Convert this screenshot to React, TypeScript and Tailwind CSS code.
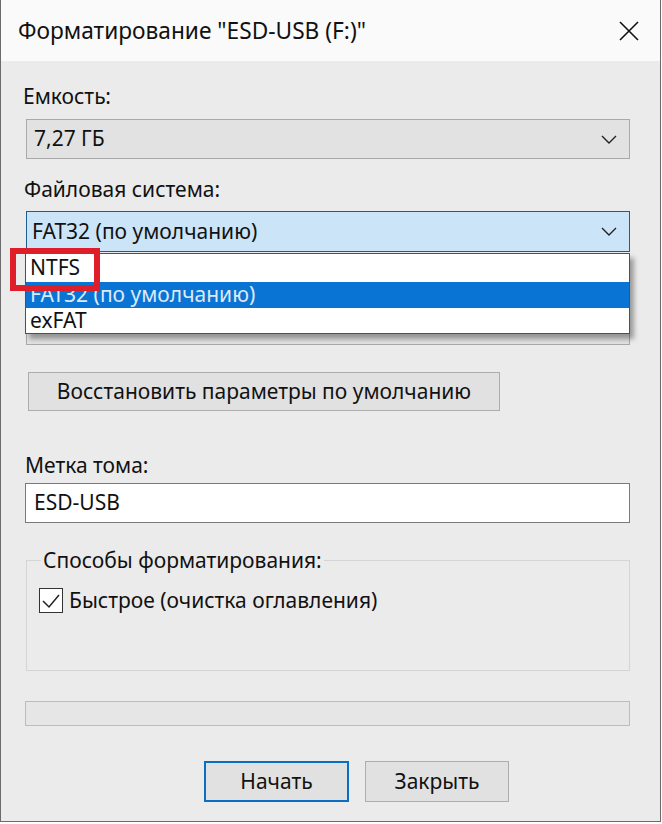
import React from 'react';

const Chevron: React.FC = () => (
  <svg width="16" height="9" viewBox="0 0 16 9" className="shrink-0">
    <path d="M1 1 L8 8 L15 1" fill="none" stroke="#222" strokeWidth="1.4" />
  </svg>
);

const App: React.FC = () => {
  return (
    <div className="w-[662px] h-[824px] bg-white relative overflow-hidden text-[21px] text-[#111] font-['Noto_Sans',sans-serif]">
      <div className="w-[661px] h-[822px] border-x border-b border-[#6b6b6b] flex flex-col">
        {/* title bar */}
        <div className="h-[61px] bg-[#fafafa] flex items-center justify-between pl-[17px] pr-[20px] shrink-0">
          <span className="text-[22.7px] leading-none mt-[2px]">Форматирование "ESD-USB (F:)"</span>
          <svg width="22" height="22" viewBox="0 0 22 22">
            <path d="M2 2 L20 20 M20 2 L2 20" stroke="#111" strokeWidth="1.6" />
          </svg>
        </div>

        {/* body */}
        <div className="flex-1 bg-[#ebebeb] px-[24px] flex flex-col">
          <div className="mt-[21px] leading-[28px] -ml-[2px]">Емкость:</div>
          <div className="mt-[9px] h-[40px] bg-[#e2e2e2] border border-[#a9a9a9] flex items-center justify-between pl-[7px] pr-[12px] ml-[1px] w-[604px]">
            <span>7,27 ГБ</span>
            <Chevron />
          </div>

          <div className="mt-[16px] leading-[28px] -ml-[1px]">Файловая система:</div>
          <div className="mt-[8px] h-[41px] bg-[#cce4f7] border border-[#1c5f8f] flex items-center justify-between pl-[5px] pr-[12px] ml-[1px] w-[604px]">
            <span>FAT32 (по умолчанию)</span>
            <Chevron />
          </div>

          {/* allocation unit row, hidden behind the open list */}
          <div className="mt-[16px] h-[28px]" />
          <div className="mt-[9px] h-[40px] bg-[#e2e2e2] border border-[#a9a9a9] ml-[1px] w-[604px]" />

          <button className="mt-[27px] ml-[3px] w-[472px] h-[39px] bg-[#e1e1e1] border border-[#adadad] flex items-center justify-center">
            Восстановить параметры по умолчанию
          </button>

          <div className="mt-[40px] leading-[28px]">Метка тома:</div>
          <div className="mt-[4px] h-[40px] w-[605px] bg-white border border-[#7a7a7a] flex items-center pl-[8px]">
            ESD-USB
          </div>

          <fieldset className="mt-[23px] ml-[1px] w-[604px] border border-[#d4d4d4] pl-[12px] pb-[57px]">
            <legend className="ml-[2px] px-[2px] leading-[28px]">Способы форматирования:</legend>
            <div className="mt-[14px] flex items-center gap-[6px]">
              <div className="w-[24px] h-[25px] bg-white border border-[#333] flex items-center justify-center">
                <svg width="20" height="16" viewBox="0 0 20 16">
                  <path d="M2 8 L8 14 L18 2" fill="none" stroke="#222" strokeWidth="1.5" />
                </svg>
              </div>
              <span className="leading-[25px]">Быстрое (очистка оглавления)</span>
            </div>
          </fieldset>

          <div className="mt-[30px] w-[605px] h-[25px] bg-[#e6e6e6] border border-[#bcbcbc]" />

          <div className="mt-[35px] pl-[179px] flex gap-[16px]">
            <button className="w-[145px] h-[41px] bg-[#e1e1e1] border-2 border-[#0a6fc2] flex items-center justify-center">
              Начать
            </button>
            <button className="w-[144px] h-[41px] bg-[#e1e1e1] border border-[#adadad] flex items-center justify-center">
              Закрыть
            </button>
          </div>
        </div>
      </div>

      {/* open dropdown list */}
      <div className="absolute left-[25px] top-[253px] w-[605px] h-[81px] bg-white border border-[#1c5f8f] shadow-[4px_5px_5px_rgba(0,0,0,0.35)] flex flex-col">
        <div className="h-[28px] flex items-center pl-[4px]">NTFS</div>
        <div className="h-[26px] flex items-center pl-[4px] bg-[#0a74d4] text-[#dce9f7]">FAT32 (по умолчанию)</div>
        <div className="h-[25px] flex items-center pl-[4px]">exFAT</div>
      </div>

      {/* red highlight */}
      <div className="absolute left-[10px] top-[248px] w-[90px] h-[43px] border-[6px] border-[#de1f2a]" />
    </div>
  );
};

export default App;
